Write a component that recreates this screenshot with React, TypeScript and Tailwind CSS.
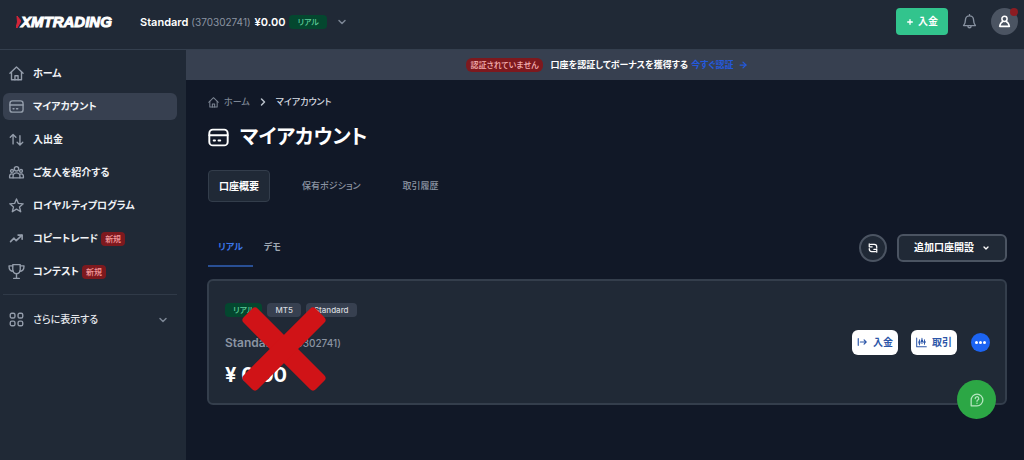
import type { ReactNode } from 'react';
import clsx from 'clsx';
import { ArrowRight, ChevronDown, ChevronRight, Plus } from 'lucide-react';

interface IconProps {
  className?: string;
}

interface NavItem {
  label: string;
  icon: (props: IconProps) => ReactNode;
  isNew?: boolean;
  active?: boolean;
}

function Icon({ className, children }: IconProps & { children: ReactNode }) {
  return (
    <svg
      viewBox="0 0 24 24"
      fill="none"
      stroke="currentColor"
      strokeWidth="2.2"
      strokeLinecap="round"
      strokeLinejoin="round"
      aria-hidden="true"
      className={clsx('shrink-0', className)}
    >
      {children}
    </svg>
  );
}

const HomeIcon = ({ className }: IconProps) => (
  <Icon className={className}>
    <path d="M1.5 11.5 12 1.5l10.5 10" />
    <path d="M4 9.5V22h16V9.5" />
    <path d="M9.5 22v-6.5h5V22" />
  </Icon>
);

const CardIcon = ({ className }: IconProps) => (
  <Icon className={className}>
    <rect x="1.5" y="3" width="21" height="18" rx="4" />
    <path d="M1.5 9.5h21" />
    <path d="M6.5 15.5h1.5M12 15.5h2" />
  </Icon>
);

const TransferIcon = ({ className }: IconProps) => (
  <Icon className={className}>
    <path d="M6.5 19V4M2 8.5 6.5 4 11 8.5" />
    <path d="M17.5 6v15M13 16.5l4.5 4.5 4.5-4.5" />
  </Icon>
);

const FriendsIcon = ({ className }: IconProps) => (
  <Icon className={className}>
    <circle cx="12" cy="6" r="3.5" />
    <circle cx="4.8" cy="9.5" r="2.3" />
    <circle cx="19.2" cy="9.5" r="2.3" />
    <path d="M6.5 20.5v-2.5a5.5 5.5 0 0 1 11 0v2.5z" />
    <path d="M6.5 20.5H1v-3a3.5 3.5 0 0 1 5-3M17.5 20.5H23v-3a3.5 3.5 0 0 0-5-3" />
  </Icon>
);

const StarIcon = ({ className }: IconProps) => (
  <Icon className={className}>
    <path d="m12 1.5 3 7.2 7.7.6-5.9 5 1.9 7.7-6.7-4.2L5.3 22l1.9-7.7-5.9-5 7.7-.6z" />
  </Icon>
);

const TrendIcon = ({ className }: IconProps) => (
  <Icon className={className}>
    <path d="m2.5 17 5.5-5.500 3.500 4L20.500 7" strokeWidth="2.6" />
    <path d="M14.500 6.500h6.500V13" strokeWidth="2.6" />
  </Icon>
);

const TrophyIcon = ({ className }: IconProps) => (
  <Icon className={className}>
    <path d="M6 1h12v7.5c0 4.500-2.500 7-6 7s-6-2.500-6-7z" />
    <path d="M6 3H0c0 5 2.500 8.500 7 8.500M18 3h6c0 5-2.500 8.500-7 8.500" />
    <path d="M12 15.500V23M7.500 23h9" />
  </Icon>
);

const GridIcon = ({ className }: IconProps) => (
  <Icon className={className}>
    <rect x="2" y="2" width="7.5" height="7.5" rx="2.5" />
    <rect x="14.5" y="2" width="7.5" height="7.5" rx="2.5" />
    <rect x="2" y="14.5" width="7.5" height="7.5" rx="2.5" />
    <rect x="14.5" y="14.5" width="7.5" height="7.5" rx="2.5" />
  </Icon>
);

const BellIcon = ({ className }: IconProps) => (
  <Icon className={className}>
    <path d="M12 1v2M12 3a6.500 6.500 0 0 0-6.500 6.500c0 5-1.500 7-3 9h19c-1.500-2-3-4-3-9A6.500 6.500 0 0 0 12 3z" />
    <path d="M9.500 19c0 4 5 4 5 0" />
  </Icon>
);

const PersonIcon = ({ className }: IconProps) => (
  <Icon className={className}>
    <circle cx="12" cy="7" r="4.8" strokeWidth="2.8" />
    <path d="M9 12c-3.500 1.500-5 4-6 9h18c-1-5-2.500-7.500-6-9" strokeWidth="2.8" />
  </Icon>
);

const RefreshIcon = ({ className }: IconProps) => (
  <Icon className={className}>
    <path d="M3 2v7h7M6 3.500h9c3.500 0 6 2 6 6v3" strokeWidth="3" />
    <path d="M21 22v-7h-7M18 20.500H9c-3.500 0-6-2-6-6v-1" strokeWidth="3" />
  </Icon>
);

const DepositIcon = ({ className }: IconProps) => (
  <Icon className={className}>
    <path d="M3 4v16M8 12h14M17 7l5 5-5 5" strokeWidth="2.8" />
  </Icon>
);

const ChartIcon = ({ className }: IconProps) => (
  <Icon className={className}>
    <path d="M1.500 2v19.500h21" />
    <path d="M7.500 6v11M13 3v11M18.500 6v10" />
    <path d="M7.500 9v5M13 6v5M18.500 8.500v4.500" strokeWidth="4.5" strokeLinecap="butt" />
  </Icon>
);

const HelpIcon = ({ className }: IconProps) => (
  <Icon className={className}>
    <path d="M2 22V12a10 10 0 1 1 10 10z" />
    <path d="M9 9.500a3 3 0 1 1 4.500 2.500c-1 .6-1.500 1-1.500 2.200M12 17.500v.1" />
  </Icon>
);

const navItems: NavItem[] = [
  { label: 'ホーム', icon: HomeIcon },
  { label: 'マイアカウント', icon: CardIcon, active: true },
  { label: '入出金', icon: TransferIcon },
  { label: 'ご友人を紹介する', icon: FriendsIcon },
  { label: 'ロイヤルティプログラム', icon: StarIcon },
  { label: 'コピートレード', icon: TrendIcon, isNew: true },
  { label: 'コンテスト', icon: TrophyIcon, isNew: true },
];

function Header() {
  return (
    <header className="flex h-[50px] items-center justify-between border-b border-[#343f4e] bg-[#202936] pb-[6px] pl-4 pr-[6px]">
      <div className="flex items-center">
        <a
          href="#"
          className="flex w-[124px] items-center font-['Liberation_Sans',sans-serif] text-[15px] font-bold italic leading-4 text-white [-webkit-text-stroke:1px_white]"
        >
          <svg viewBox="0 0 5 12" aria-hidden="true" className="h-3 w-[5px] shrink-0">
            <path d="M1 0 5 5 1 12 0 12 1.5 6z" fill="#d3263a" stroke="#d3263a" />
          </svg>
          XMTRADING
        </a>
        <button type="button" className="flex items-center whitespace-nowrap text-[11px] leading-4">
          <span className="font-semibold text-white">Standard</span>
          <span className="ml-[3px] text-[10px] text-[#8b94a2]">(370302741)</span>
          <span className="ml-[4px] font-semibold text-white">¥0.00</span>
          <span className="ml-[4px] rounded bg-[#04472f] px-2 text-[8px] font-medium leading-[14px] text-[#5fce9b]">
            リアル
          </span>
          <ChevronDown className="ml-[9px] size-3 text-[#7b8594]" strokeWidth={3} />
        </button>
      </div>
      <div className="flex items-center">
        <button
          type="button"
          className="flex h-[27px] items-center gap-1 rounded bg-[#32c48d] px-[10px] text-[10px] font-bold text-white"
        >
          <Plus className="size-2" strokeWidth={4} />
          入金
        </button>
        <button type="button" aria-label="通知" className="ml-[14px] text-[#8791a0]">
          <BellIcon className="size-[15px]" />
        </button>
        <button
          type="button"
          aria-label="プロフィール"
          className="relative ml-[14px] flex size-[27px] items-center justify-center rounded-full bg-[#4b5462] text-white"
        >
          <PersonIcon className="size-[13px]" />
          <span className="absolute right-0 top-0 size-2 rounded-full bg-[#8c1c22]" />
        </button>
      </div>
    </header>
  );
}

function Sidebar() {
  return (
    <aside className="w-[186px] shrink-0 bg-[#202936] pl-[3px] pr-[9px] pt-[10px]">
      <nav>
        <ul className="flex flex-col gap-[6px]">
          {navItems.map(({ label, icon: ItemIcon, isNew, active }) => (
            <li key={label}>
              <a
                href="#"
                className={clsx(
                  'flex h-[27px] items-center whitespace-nowrap rounded-md pl-[6px] text-[10px] font-bold text-[#f1f3f6]',
                  active && 'bg-[#374050]',
                )}
              >
                <ItemIcon className="mr-[9px] size-[15px] overflow-visible text-[#949dab]" />
                {label}
                {isNew && (
                  <span className="ml-[3px] rounded bg-[#7d191e] px-1 text-[8px] font-medium leading-[14px] text-[#f3989b]">
                    新規
                  </span>
                )}
              </a>
            </li>
          ))}
        </ul>
        <button
          type="button"
          className="mt-[9px] flex h-[50px] w-full items-center border-t border-[#303a48] pl-[6px] pr-2 text-[10px] font-medium text-[#e4e7ec]"
        >
          <GridIcon className="mr-[9px] size-[15px] text-[#949dab]" />
          さらに表示する
          <ChevronDown className="ml-auto size-3 text-[#7b8594]" strokeWidth={3} />
        </button>
      </nav>
    </aside>
  );
}

function Banner() {
  return (
    <div className="flex h-[30px] items-center justify-center bg-[#374050] pl-1 text-[9px] font-bold text-white">
      <span className="mr-2 rounded-md bg-[#7d191e] px-1 text-[8px] font-medium leading-[14px] text-[#f7b3b4]">
        認証されていません
      </span>
      口座を認証してボーナスを獲得する
      <a href="#" className="ml-[3px] flex items-center gap-1 text-[#2459dc]">
        今すぐ認証
        <ArrowRight className="size-[10px]" strokeWidth={3} />
      </a>
    </div>
  );
}

function AccountCard() {
  return (
    <section className="relative mt-3 flex h-[126px] items-center justify-between rounded-md border-2 border-[#343e4c] bg-[#202936] pl-4 pr-[15px]">
      <div className="pt-[6px]">
        <div className="flex gap-[5px] text-[8px] font-medium leading-[14px]">
          <span className="rounded bg-[#04472f] px-2 text-[#5fce9b]">リアル</span>
          <span className="rounded bg-[#374050] px-2 text-[#d5d9df]">MT5</span>
          <span className="rounded bg-[#374050] px-2 text-[#d5d9df]">Standard</span>
        </div>
        <p className="mt-4 text-[12px] font-semibold leading-5 text-[#8b94a2]">
          Standard <span className="text-[10px] font-medium">(370302741)</span>
        </p>
        <p className="mt-[10px] text-[20px] font-bold leading-6 text-white">¥ 0.00</p>
      </div>
      <div className="flex items-center">
        <button
          type="button"
          className="flex h-[25px] items-center gap-[6px] rounded-md bg-white px-[5px] text-[10px] font-bold text-[#2c56a8]"
        >
          <DepositIcon className="size-[10px]" />
          入金
        </button>
        <button
          type="button"
          className="ml-[13px] flex h-[25px] items-center gap-[5px] rounded-md bg-white px-[5px] text-[10px] font-bold text-[#2c56a8]"
        >
          <ChartIcon className="size-[11px]" />
          取引
        </button>
        <button
          type="button"
          aria-label="その他"
          className="ml-[14px] flex size-[19px] items-center justify-center gap-px rounded-full bg-[#1c64f2]"
        >
          <span className="size-[3px] rounded-full bg-white" />
          <span className="size-[3px] rounded-full bg-white" />
          <span className="size-[3px] rounded-full bg-white" />
        </button>
      </div>
      <svg
        viewBox="0 0 84 84"
        aria-hidden="true"
        className="absolute left-[33px] top-[26px] size-[84px]"
      >
        <g fill="#d01317">
          <rect x="-9" y="32" width="102" height="20" rx="4" transform="rotate(45 42 42)" />
          <rect x="-9" y="32" width="102" height="20" rx="4" transform="rotate(-45 42 42)" />
        </g>
      </svg>
    </section>
  );
}

export default function App() {
  return (
    <div className="relative flex min-h-screen flex-col bg-[#111827] font-[Inter,'Noto_Sans_CJK_JP',sans-serif] [font-feature-settings:'palt']">
      <Header />
      <div className="flex flex-1">
        <Sidebar />
        <div className="min-w-0 flex-1">
          <Banner />
          <main className="pl-[21px] pr-[17px] pt-[14px]">
            {/* Breadcrumb */}
            <nav className="flex h-4 items-center pl-px text-[9px] font-medium text-[#7d8694]">
              <a href="#" className="flex items-center gap-[5px]">
                <HomeIcon className="size-[11px]" />
                ホーム
              </a>
              <ChevronRight className="mx-[7px] size-3 text-[#b9c0ca]" strokeWidth={3} />
              <span className="text-[#d8dce2]">マイアカウント</span>
            </nav>

            <h1 className="mt-[11px] flex h-8 items-center gap-[11px] pl-px text-[20px] font-bold text-white">
              <CardIcon className="size-[21px]" />
              マイアカウント
            </h1>

            <div className="mt-[17px] flex h-8 items-center text-[9px] font-medium text-[#8b94a2]">
              <button
                type="button"
                className="ml-px h-8 rounded border border-[#333d4b] bg-[#202936] px-[10px] text-[10px] font-bold text-white"
              >
                口座概要
              </button>
              <button type="button" className="ml-8">
                保有ポジション
              </button>
              <button type="button" className="ml-[42px]">
                取引履歴
              </button>
            </div>

            <div className="mt-[26px] flex items-center justify-between">
              <div className="flex h-[39px] pl-px text-[9px] font-bold">
                <button type="button" className="border-b-2 border-[#294f94] px-[10px] text-[#3b76e8]">
                  リアル
                </button>
                <button type="button" className="border-b-2 border-transparent px-[11px] text-[#a0a8b4]">
                  デモ
                </button>
              </div>
              <div className="flex items-center gap-[10px]">
                <button
                  type="button"
                  aria-label="更新"
                  className="flex size-7 items-center justify-center rounded-full border-2 border-[#4b5462] bg-[#202936] text-white"
                >
                  <RefreshIcon className="size-[10px]" />
                </button>
                <button
                  type="button"
                  className="flex h-7 items-center gap-[8px] rounded-md border-2 border-[#4b5462] bg-[#202936] px-[15px] text-[10px] font-bold text-white"
                >
                  追加口座開設
                  <ChevronDown className="size-2" strokeWidth={4} />
                </button>
              </div>
            </div>

            <AccountCard />
          </main>
        </div>
      </div>

      {/* Floating help button */}
      <button
        type="button"
        aria-label="ヘルプ"
        className="absolute bottom-[41px] right-[28px] flex size-[39px] items-center justify-center rounded-full bg-[#2ca745] text-[#b5e6bf]"
      >
        <HelpIcon className="size-[14px]" />
      </button>
    </div>
  );
}
